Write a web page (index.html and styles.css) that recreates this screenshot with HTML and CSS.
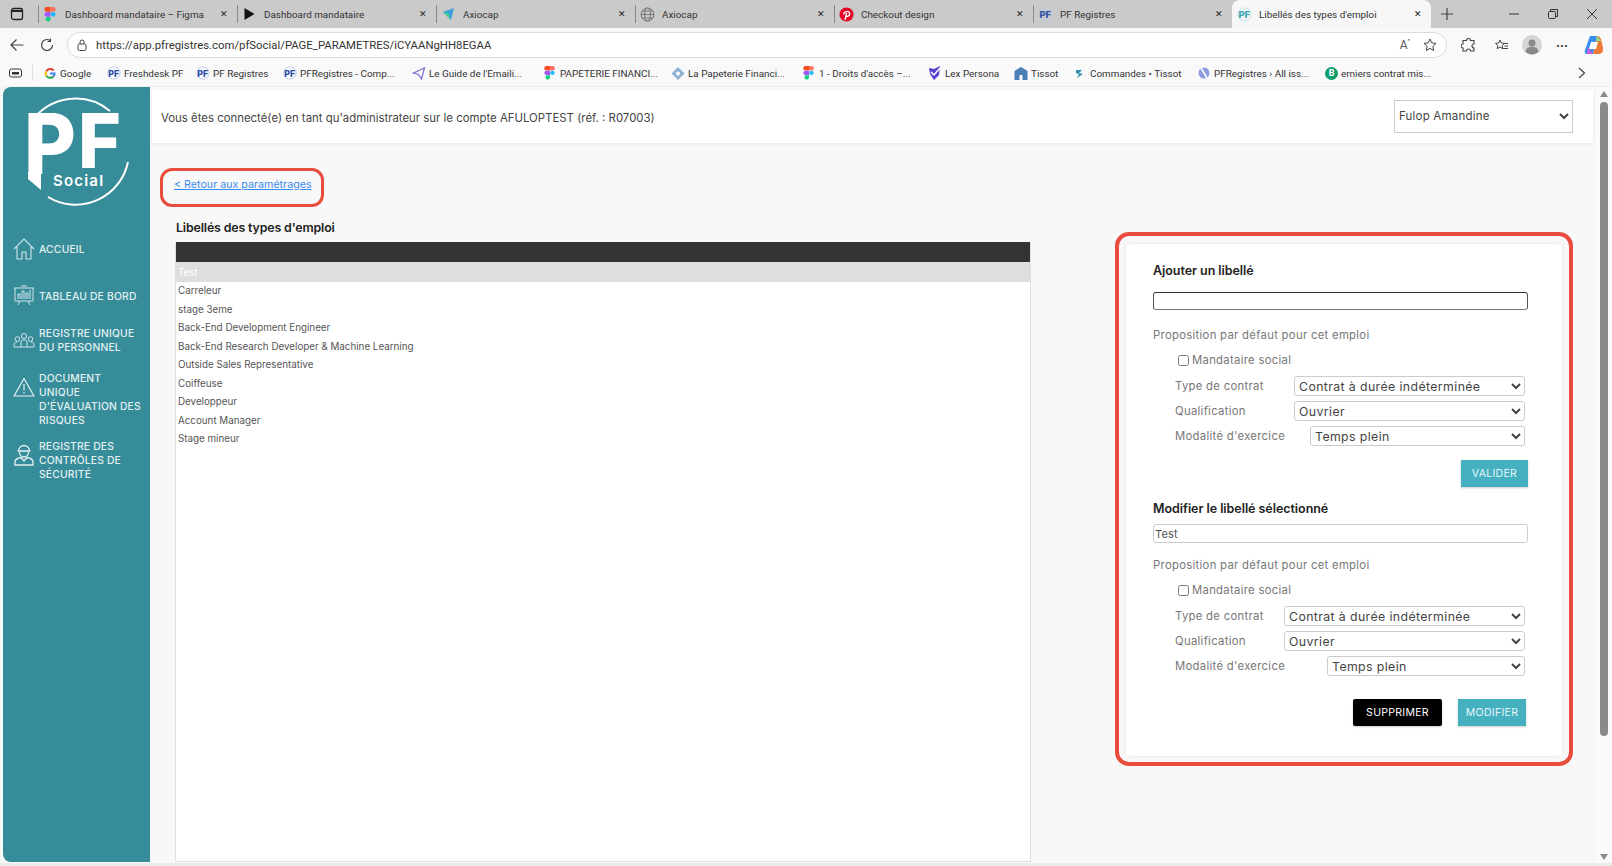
FILE: index.html
```html
<!DOCTYPE html>
<html lang="fr">
<head>
<meta charset="utf-8">
<title>Libellés des types d'emploi</title>
<link rel="stylesheet" href="styles.css">
</head>
<body>
<svg class="defs" width="0" height="0" aria-hidden="true">
  <symbol id="figma" viewBox="0 0 12 16">
    <path d="M2 0h4v5H2a2.5 2.5 0 0 1 0-5z" fill="#f24e1e"/>
    <path d="M6 0h3a2.5 2.5 0 0 1 0 5H6z" fill="#ff7262"/>
    <path d="M2 5.300h4v5H2a2.500 2.500 0 0 1 0-5z" fill="#a259ff"/>
    <circle cx="8.800" cy="7.800" r="2.500" fill="#1abcfe"/>
    <path d="M2 10.600h4V13a2.600 2.600 0 1 1-4-2.400z" fill="#0acf83"/>
  </symbol>
  <symbol id="pf" viewBox="0 0 16 16">
    <circle cx="8" cy="8" r="7" fill="none" stroke="#b9c6e8" stroke-width="1"/>
    <text x="1.500" y="12" font-family="Inter, sans-serif" font-size="10" font-weight="800" fill="#2b4fa8">PF</text>
  </symbol>
  <symbol id="pfteal" viewBox="0 0 16 16">
    <circle cx="8" cy="8" r="7" fill="none" stroke="#bfe3e8" stroke-width="1"/>
    <text x="1.500" y="12" font-family="Inter, sans-serif" font-size="10" font-weight="800" fill="#3aa6b6">PF</text>
  </symbol>
</svg>

<header class="tabstrip">
  <div class="win-menu">
    <svg width="14" height="14" viewBox="0 0 14 14"><rect x="1.500" y="1.500" width="11" height="11" rx="2" fill="none" stroke="#222" stroke-width="1.300"/><path d="M1.500 3h11v2h-11z" fill="#222"/></svg>
  </div>
  <div class="tab">
    <svg class="fav" width="11" height="15"><use href="#figma"/></svg>
    <span class="tab-title">Dashboard mandataire – Figma</span><span class="tab-x">✕</span>
  </div>
  <div class="tab">
    <svg class="fav" width="12" height="12" viewBox="0 0 12 12"><path d="M1 0l10 6-10 6z" fill="#111"/></svg>
    <span class="tab-title">Dashboard mandataire</span><span class="tab-x">✕</span>
  </div>
  <div class="tab">
    <svg class="fav" width="13" height="14" viewBox="0 0 13 14"><path d="M1 5l11-4-3 12z" fill="#3aa0d8"/><path d="M1 5l5 1 3 7z" fill="#3fcf8e"/></svg>
    <span class="tab-title">Axiocap</span><span class="tab-x">✕</span>
  </div>
  <div class="tab">
    <svg class="fav" width="15" height="15" viewBox="0 0 15 15" fill="none" stroke="#777"><circle cx="7.500" cy="7.500" r="6.500"/><ellipse cx="7.500" cy="7.500" rx="3" ry="6.500"/><path d="M1 7.500h13M2 4h11M2 11h11"/></svg>
    <span class="tab-title">Axiocap</span><span class="tab-x">✕</span>
  </div>
  <div class="tab">
    <svg class="fav" width="15" height="15" viewBox="0 0 15 15"><circle cx="7.500" cy="7.500" r="7" fill="#e60023"/><path d="M6 13l1.600-7M5 7.500C4 4.500 10.500 3 10.700 6.500 10.800 9.500 7.500 10 7 8.500" fill="none" stroke="#fff" stroke-width="1.400"/></svg>
    <span class="tab-title">Checkout design</span><span class="tab-x">✕</span>
  </div>
  <div class="tab">
    <svg class="fav" width="15" height="15"><use href="#pf"/></svg>
    <span class="tab-title">PF Registres</span><span class="tab-x">✕</span>
  </div>
  <div class="tab tab-active">
    <svg class="fav" width="15" height="15"><use href="#pfteal"/></svg>
    <span class="tab-title">Libellés des types d'emploi</span><span class="tab-x">✕</span>
  </div>
  <div class="tab-new">
    <svg width="12" height="12" viewBox="0 0 12 12"><path d="M6 0v12M0 6h12" stroke="#444" stroke-width="1.200"/></svg>
  </div>
  <div class="win-controls">
    <svg width="10" height="10" viewBox="0 0 10 10"><path d="M0 5h10" stroke="#333"/></svg>
    <svg width="10" height="10" viewBox="0 0 10 10" fill="none" stroke="#333"><rect x=".5" y="2.500" width="7" height="7" rx="1"/><path d="M2.500 2.500V.5h7v7H7.500"/></svg>
    <svg width="10" height="10" viewBox="0 0 10 10"><path d="M0 0l10 10M10 0L0 10" stroke="#333"/></svg>
  </div>
</header>

<div class="toolbar">
  <svg class="tool-ico" width="14" height="14" viewBox="0 0 14 14" fill="none" stroke="#444" stroke-width="1.200"><path d="M13.500 7H1M6.500 1.500L1 7l5.500 5.500"/></svg>
  <svg class="tool-ico" width="14" height="14" viewBox="0 0 14 14" fill="none" stroke="#444" stroke-width="1.200"><path d="M12.500 7A5.500 5.500 0 1 1 10 2.400M10.500.5v3h-3"/></svg>
  <div class="omnibox">
    <svg width="10" height="12" viewBox="0 0 10 12" fill="none" stroke="#444"><rect x="1" y="5" width="8" height="6.500" rx="1.500"/><path d="M3 5V3a2 2 0 0 1 4 0v2"/></svg>
    <span class="url">https://app.pfregistres.com/pfSocial/PAGE_PARAMETRES/iCYAANgHH8EGAA</span>
    <span class="omni-a">A<sup>”</sup></span>
    <svg width="14" height="14" viewBox="0 0 14 14" fill="none" stroke="#444"><path d="M7 1l1.800 3.900 4.200.5-3.100 2.900.8 4.200L7 10.400l-3.700 2.100.8-4.200L1 5.400l4.200-.5z"/></svg>
  </div>
  <div class="tool-right">
    <svg width="15" height="15" viewBox="0 0 15 15" fill="none" stroke="#444" stroke-width="1.100"><path d="M5.500 2.500a2 2 0 0 1 4 0H13v3.500a2 2 0 0 0 0 4V13H9.500a2 2 0 0 0-4 0H2v-3a2 2 0 0 1 0-4V2.500z"/></svg>
    <svg class="tool-fav" width="15" height="15" viewBox="0 0 15 15" fill="none" stroke="#444"><path d="M6 2l1.300 3 3.200.4-2.300 2.100.6 3.200L6 9.100 3.200 10.700l.6-3.200L1.500 5.400 4.700 5zM10 5.500h4M10.500 8h3.500M9 10.500h5"/></svg>
    <svg class="tool-avatar" width="20" height="20" viewBox="0 0 20 20"><circle cx="10" cy="10" r="10" fill="#d5d5d5"/><circle cx="10" cy="8" r="3.500" fill="#8a8a8a"/><path d="M3.500 17a6.500 5.500 0 0 1 13 0 10 10 0 0 1-13 0z" fill="#8a8a8a"/></svg>
    <span class="tool-dots">···</span>
    <svg class="tool-copilot" width="20" height="20" viewBox="0 0 20 20"><path d="M6 1h7l-4 18H3C1 19 0 17 1 15z" fill="#3a8df0"/><path d="M13 1c2 0 3 1 4 3l2 9c.5 3-1 6-4 6H9z" fill="#f07a3a"/><path d="M7 7h7l-2 7H5z" fill="#fff"/><path d="M13 1l4 5h-5z" fill="#7be08f"/><path d="M4 12l5 7H3z" fill="#c85ae0"/></svg>
  </div>
</div>

<nav class="bookmarks">
  <svg class="bm-menu" width="13" height="11" viewBox="0 0 13 11"><rect x=".5" y="1" width="12" height="8" rx="2" fill="none" stroke="#333"/><path d="M3 4h7v2.500H3z" fill="#333"/></svg>
  <span class="bm-sep"></span>
  <a class="bm bm-google"><svg width="11" height="11" viewBox="0 0 12 12" fill="none" stroke-width="2.200"><path d="M10 2.700A5 5 0 0 0 2 3.500" stroke="#ea4335"/><path d="M2 3.500a5 5 0 0 0 0 5" stroke="#fbbc05"/><path d="M2 8.500a5 5 0 0 0 8 .5" stroke="#34a853"/><path d="M10 9a5 5 0 0 0 1-3H6" stroke="#4285f4"/></svg>Google</a>
  <a class="bm bm-fresh"><svg width="14" height="14"><use href="#pf"/></svg>Freshdesk PF</a>
  <a class="bm bm-reg"><svg width="14" height="14"><use href="#pf"/></svg>PF Registres</a>
  <a class="bm bm-comp"><svg width="14" height="14"><use href="#pf"/></svg>PFRegistres - Comp...</a>
  <a class="bm bm-guide"><svg width="13" height="13" viewBox="0 0 13 13" fill="none" stroke="#7a6fd0" stroke-width="1.200"><path d="M12 1L1 6l5 1.500L9 12z"/></svg>Le Guide de l'Emaili...</a>
  <a class="bm bm-pap"><svg width="14" height="14"><use href="#figma"/></svg>PAPETERIE FINANCI...</a>
  <a class="bm bm-lap"><svg width="13" height="13" viewBox="0 0 13 13"><path d="M6.500 0L13 6.500 6.500 13 0 6.500z" fill="#8fb3d3"/><circle cx="6.500" cy="6.500" r="2" fill="#fff"/></svg>La Papeterie Financi...</a>
  <a class="bm bm-droits"><svg width="14" height="14"><use href="#figma"/></svg>1 - Droits d'accès –...</a>
  <a class="bm bm-lex"><svg width="14" height="14" viewBox="0 0 14 14"><path d="M1 2l5 1 6-3-1 9-5 5-4-6z" fill="#5a3fd0"/><path d="M3 6l3 3 6-7" fill="none" stroke="#fff" stroke-width="1.500"/></svg>Lex Persona</a>
  <a class="bm bm-tis"><svg width="13" height="13" viewBox="0 0 13 13"><path d="M6.500 0L13 4v9H8V8H5v5H0V4z" fill="#4a7fb5"/></svg>Tissot</a>
  <a class="bm bm-com"><svg width="8" height="11" viewBox="0 0 8 11"><path d="M0 2h6L3 5l4 1-6 4 2-4-3-1z" fill="#2f8fb0"/></svg>Commandes • Tissot</a>
  <a class="bm bm-all"><svg width="12" height="12" viewBox="0 0 12 12"><circle cx="6" cy="6" r="5.500" fill="#8c9be0"/><path d="M3 1l6 10" stroke="#fff" stroke-width="1.500"/></svg>PFRegistres › All iss...</a>
  <a class="bm bm-b"><span class="bm-b-ico">B</span>erniers contrat mis...</a>
  <svg class="bm-more" width="8" height="12" viewBox="0 0 8 12" fill="none" stroke="#444" stroke-width="1.200"><path d="M1 1l5.500 5L1 11"/></svg>
</nav>

<div class="viewport">
  <aside class="sidebar">
    <svg class="logo" width="115" height="118" viewBox="0 0 115 118" role="img" aria-label="PF Social">
      <path d="M12 27A53.500 53.500 0 0 1 90 17" fill="none" stroke="#fff" stroke-width="2"/>
      <path d="M108 68A53.500 53.500 0 0 1 28 103" fill="none" stroke="#fff" stroke-width="2"/>
      <text class="logo-p" x="4" y="80" textLength="52" lengthAdjust="spacingAndGlyphs">P</text>
      <text class="logo-f" x="58" y="74" textLength="43" lengthAdjust="spacingAndGlyphs">F</text>
      <path d="M8 78h13v18L8 85z" fill="#fff"/>
      <text class="logo-social" x="33" y="92">Social</text>
    </svg>
    <ul class="nav">
      <li class="nav-item nav-home">
        <svg width="22" height="22" viewBox="0 0 22 22" fill="none" stroke="#cfe5e8" stroke-width="1.100"><path d="M1 11L11 1l10 10M4 9v12h5v-7h4v7h5V9"/></svg>
        <span>ACCUEIL</span>
      </li>
      <li class="nav-item nav-board">
        <svg width="22" height="22" viewBox="0 0 22 22" fill="none" stroke="#cfe5e8"><path d="M1 3h20M2 3v13h18V3M5 20l2-4M17 20l-2-4M8 1h6"/><path d="M5 14V9h2v5M9 14V6h2v8M13 14V8h2v6M17 14V5" stroke-width="1"/></svg>
        <span>TABLEAU DE BORD</span>
      </li>
      <li class="nav-item nav-reg">
        <svg width="22" height="16" viewBox="0 0 22 16" fill="none" stroke="#cfe5e8"><circle cx="4.500" cy="7" r="2.300"/><circle cx="11" cy="4" r="2.600"/><circle cx="17.500" cy="7" r="2.300"/><path d="M1 15v-2c0-2 1-3 3.500-3M8 15V9.500c0-1 1-1.500 3-1.500s3 .5 3 1.500V15M21 15v-2c0-2-1-3-3.500-3M1 15h20" /></svg>
        <span>REGISTRE UNIQUE<br>DU PERSONNEL</span>
      </li>
      <li class="nav-item nav-doc">
        <svg width="22" height="20" viewBox="0 0 22 20" fill="none" stroke="#e3f0f2" stroke-width="1.200"><path d="M11 1.500L21 19H1z" stroke-linejoin="round"/><path d="M11 7v6.500M11 15v1.500"/></svg>
        <span>DOCUMENT<br>UNIQUE<br>D'ÉVALUATION DES<br>RISQUES</span>
      </li>
      <li class="nav-item nav-sec">
        <svg width="20" height="22" viewBox="0 0 20 22" fill="none" stroke="#e3f0f2" stroke-width="1.300"><path d="M4.500 7a5.500 5.500 0 0 1 11 0zM3.500 7h13M5.500 8c0 3 2 5 4.500 5s4.500-2 4.500-5M1 21v-3c0-3 3-4 6-4.500l3 3.500 3-3.500c3 .5 6 1.500 6 4.500v3z"/></svg>
        <span>REGISTRE DES<br>CONTRÔLES DE<br>SÉCURITÉ</span>
      </li>
    </ul>
  </aside>

  <main class="main">
    <div class="topbar">
      <p class="connected">Vous êtes connecté(e) en tant qu'administrateur sur le compte AFULOPTEST (réf. : R07003)</p>
      <select class="user-select"><option>Fulop Amandine</option></select>
    </div>
    <div class="content">
      <section class="left">
        <div class="back-box"><a class="back-link" href="#">&lt; Retour aux paramétrages</a></div>
        <h1 class="title">Libellés des types d'emploi</h1>
        <div class="table">
          <div class="table-head"></div>
          <div class="row row-selected">Test</div>
          <div class="row">Carreleur</div>
          <div class="row">stage 3eme</div>
          <div class="row">Back-End Development Engineer</div>
          <div class="row">Back-End Research Developer &amp; Machine Learning</div>
          <div class="row">Outside Sales Representative</div>
          <div class="row">Coiffeuse</div>
          <div class="row">Developpeur</div>
          <div class="row">Account Manager</div>
          <div class="row">Stage mineur</div>
        </div>
      </section>

      <section class="panel">
        <div class="card">
          <h2 class="card-title card-title-add">Ajouter un libellé</h2>
          <input class="field field-focus" type="text">
          <p class="hint hint-add">Proposition par défaut pour cet emploi</p>
          <label class="check"><input type="checkbox">Mandataire social</label>
          <div class="line line-first">
            <span class="line-label">Type de contrat</span>
            <select class="sel sel-a"><option>Contrat à durée indéterminée</option></select>
          </div>
          <div class="line">
            <span class="line-label">Qualification</span>
            <select class="sel sel-a"><option>Ouvrier</option></select>
          </div>
          <div class="line">
            <span class="line-label">Modalité d'exercice</span>
            <select class="sel sel-b"><option>Temps plein</option></select>
          </div>
          <div class="actions actions-add">
            <button class="btn btn-teal btn-valider" type="button">VALIDER</button>
          </div>

          <h2 class="card-title card-title-edit">Modifier le libellé sélectionné</h2>
          <input class="field field-edit" type="text" value="Test">
          <p class="hint hint-edit">Proposition par défaut pour cet emploi</p>
          <label class="check"><input type="checkbox">Mandataire social</label>
          <div class="line line-first">
            <span class="line-label">Type de contrat</span>
            <select class="sel sel-c"><option>Contrat à durée indéterminée</option></select>
          </div>
          <div class="line">
            <span class="line-label">Qualification</span>
            <select class="sel sel-c"><option>Ouvrier</option></select>
          </div>
          <div class="line">
            <span class="line-label">Modalité d'exercice</span>
            <select class="sel sel-d"><option>Temps plein</option></select>
          </div>
          <div class="actions actions-edit">
            <button class="btn btn-black" type="button">SUPPRIMER</button>
            <button class="btn btn-teal btn-modifier" type="button">MODIFIER</button>
          </div>
        </div>
      </section>
    </div>
  </main>

  <div class="scrollbar">
    <svg width="8" height="6" viewBox="0 0 8 6"><path d="M4 0l4 6H0z" fill="#8a8a8a"/></svg>
    <div class="thumb"></div>
    <svg class="scroll-down" width="8" height="6" viewBox="0 0 8 6"><path d="M4 6l4-6H0z" fill="#8a8a8a"/></svg>
  </div>
</div>
</body>
</html>
```
FILE: styles.css
```css
* { box-sizing: border-box; }
html, body { margin: 0; padding: 0; }
body {
  width: 1612px;
  height: 866px;
  overflow: hidden;
  display: flex;
  flex-direction: column;
  background: #ececec;
  font-family: Inter, "Liberation Sans", sans-serif;
  color: #555;
}
.defs { position: absolute; }
h1, h2, p, ul { margin: 0; padding: 0; }

/* browser chrome */
.tabstrip {
  height: 28px;
  flex: none;
  display: flex;
  align-items: center;
  background: #cacaca;
  font-family: Roboto, sans-serif;
  font-size: 9.900px;
  color: #333;
}
.win-menu { width: 38px; padding-left: 10px; display: flex; }
.tab {
  width: 199px;
  height: 28px;
  display: flex;
  align-items: center;
  padding-left: 5px;
  position: relative;
  background: linear-gradient(#888, #888) left center / 1px 18px no-repeat;
}
.fav { width: 15px; flex: none; margin-right: 7px; }
.tab-title { flex: 1; white-space: nowrap; overflow: hidden; }
.tab-x { width: 14px; font-size: 9px; color: #222; margin-right: 6px; text-align: center; }
.tab-active { background: #f7f7f7; border-radius: 8px 8px 0 0; }
.tab-new { width: 32px; display: flex; justify-content: center; }
.win-controls {
  flex: 1;
  display: flex;
  justify-content: flex-end;
  gap: 29px;
  padding-right: 15px;
}

.toolbar {
  height: 32px;
  flex: none;
  display: flex;
  align-items: center;
  background: #f9f9f9;
  padding: 2px 0 0 10px;
}
.tool-ico { margin-right: 16px; flex: none; }
.omnibox {
  width: 1380px;
  margin-left: -3px;
  height: 26px;
  flex: none;
  display: flex;
  align-items: center;
  gap: 9px;
  padding: 0 9px 0 9px;
  background: #fff;
  border: 1px solid #dcdcdc;
  border-radius: 13px;
  font-family: Roboto, sans-serif;
  font-size: 11.350px;
  color: #333;
}
.url { flex: 1; }
.omni-a { font-size: 12px; color: #555; margin-right: 4px; }
.omni-a sup { font-size: 7px; }
.tool-right { display: flex; align-items: center; margin-left: 14px; }
.tool-fav { margin-left: 18px; }
.tool-avatar { margin-left: 13px; }
.tool-dots { margin-left: 14px; font-weight: 700; font-size: 12px; color: #333; width: 14px; }
.tool-copilot { margin-left: 14px; }

.bookmarks {
  height: 27px;
  flex: none;
  display: flex;
  align-items: center;
  background: #f9f9f9;
  border-bottom: 1px solid #eee;
  padding-left: 9px;
  font-family: Roboto, sans-serif;
  font-size: 9.900px;
  color: #333;
  white-space: nowrap;
}
.bm-menu { flex: none; }
.bm-sep { width: 1px; height: 16px; background: #ddd; margin: 0 10px 0 10px; }
.bm { display: flex; align-items: center; gap: 3px; flex: none; }
.bm > svg { width: 14px; flex: none; }
.bm-google { width: 64px; }
.bm-fresh { width: 89px; }
.bm-reg { width: 87px; }
.bm-comp { width: 129px; }
.bm-guide { width: 131px; }
.bm-pap { width: 128px; }
.bm-lap { width: 131px; }
.bm-droits { width: 126px; }
.bm-lex { width: 86px; }
.bm-tis { width: 59px; }
.bm-com { width: 124px; }
.bm-all { width: 128px; }
.bm-b { width: 150px; }
.bm-b-ico {
  width: 13px;
  height: 13px;
  border-radius: 50%;
  background: #0f9d6b;
  color: #fff;
  font-size: 9px;
  font-weight: 700;
  text-align: center;
  line-height: 13px;
}
.bm-more { margin-left: 103px; flex: none; }

/* page */
.viewport {
  height: 776px;
  flex: none;
  display: flex;
  background: #f8f8f8;
}
.sidebar {
  width: 147px;
  height: 775px;
  flex: none;
  margin-left: 3px;
  background: #368c99;
  border-radius: 8px 0 0 8px;
  color: #e3f0f2;
  padding-left: 17px;
}
.logo { display: block; margin-top: 7px; }
.logo-p { font: 800 84px Inter, sans-serif; fill: #fff; }
.logo-f { font: 800 76px Inter, sans-serif; fill: #fff; }
.logo-social { font: 600 15px Inter, sans-serif; fill: #fff; letter-spacing: 1.200px; }
.nav { list-style: none; margin-left: -7px; margin-top: 30px; }
.nav-item {
  display: flex;
  align-items: center;
  gap: 4px;
  font-size: 10.300px;
  line-height: 14px;
  letter-spacing: .2px;
  font-weight: 500;
  white-space: nowrap;
}
.nav-item svg { flex: none; width: 22px; }
.nav-home svg, .nav-board svg { margin: -6px 0; }
.nav-board { margin-top: 33px; }
.nav-reg { margin-top: 23px; }
.nav-doc { margin-top: 17px; }
.nav-doc svg { margin-bottom: 24px; }
.nav-sec { margin-top: 12px; }
.nav-sec svg { margin-bottom: 10px; }

.main { flex: 1; min-width: 0; margin-left: 2px; display: flex; flex-direction: column; }
.topbar {
  height: 53px;
  margin-top: 3px;
  flex: none;
  background: #fff;
  box-shadow: 0 1px 3px rgba(0, 0, 0, .07);
  display: flex;
  align-items: center;
  justify-content: space-between;
  padding: 0 20px 0 9px;
}
.connected { font-size: 11.400px; color: #444; margin-top: 2px; }
.user-select {
  width: 179px;
  height: 33px;
  margin-top: -1px;
  border: 1px solid #ccc;
  background: #fff;
  font: 11.500px Inter, sans-serif;
  letter-spacing: .2px;
  color: #444;
}

.content { flex: 1; min-height: 0; display: flex; justify-content: space-between; }
.left { width: 878px; display: flex; flex-direction: column; padding-left: 8px; }
.back-box {
  width: 164px;
  height: 39px;
  margin-top: 25px;
  flex: none;
  border: 3.500px solid #e74c3c;
  border-radius: 12px;
  display: flex;
  align-items: center;
  padding: 0 0 6px 11px;
}
.back-link { font-size: 10.700px; color: #3b8df0; white-space: nowrap; }
.title {
  margin: 13px 0 6px 16px;
  font-size: 12.400px;
  line-height: 16px;
  font-weight: 600;
  color: #222;
  letter-spacing: -.15px;
}
.table {
  flex: 1;
  margin: 0 0 1px 15px;
  width: 856px;
  background: #fff;
  border: 1px solid #e1e1e1;
  border-top: 0;
  overflow: hidden;
  font-size: 9.800px;
  color: #555;
}
.table-head { height: 20px; background: #333; }
.row { height: 18.500px; line-height: 18px; padding-left: 2px; }
.row-selected { height: 20px; line-height: 21px; background: #dedede; color: #fff; }

.panel {
  width: 458px;
  height: 534px;
  margin: 89px 20px 0 0;
  flex: none;
  border: 4px solid #e74c3c;
  border-radius: 14px;
  padding: 8px 7px 6px;
}
.card {
  height: 512px;
  background: #fff;
  box-shadow: 0 0 4px rgba(0, 0, 0, .08);
  padding: 19px 34px 0 27px;
}
.card-title { font-size: 12.500px; line-height: 16px; font-weight: 600; color: #222; letter-spacing: -.05px; }
.card-title-edit { margin-top: 14px; }
.field {
  display: block;
  width: 375px;
  height: 18px;
  padding: 0 1px;
  border: 1px solid #ccc;
  border-radius: 3px;
  background: #fff;
  font: 11px Inter, sans-serif;
  letter-spacing: .2px;
  color: #555;
  outline: 0;
}
.field-focus { margin-top: 13px; border-color: #333 #555 #777 #555; }
.field-edit { margin-top: 7px; height: 19px; }
.hint { font-size: 11.300px; line-height: 16px; color: #777; letter-spacing: .3px; }
.hint-add { margin-top: 17px; }
.hint-edit { margin-top: 14px; }
.check {
  display: flex;
  align-items: center;
  height: 16px;
  margin: 9px 0 0 25px;
  font-size: 11.300px;
  color: #777;
  letter-spacing: .3px;
}
.check input { width: 11px; height: 11px; margin: 0 3px 0 0; }
.line {
  display: flex;
  justify-content: space-between;
  align-items: center;
  height: 20px;
  margin: 5px 3px 0 22px;
  font-size: 11.300px;
  color: #777;
  letter-spacing: .3px;
}
.line-first { margin-top: 8px; }
.sel {
  height: 20px;
  border: 1px solid #ccc;
  border-radius: 3px;
  background: #fff;
  font: 12.300px Inter, sans-serif;
  letter-spacing: .4px;
  color: #444;
}
.sel-a { width: 231px; }
.sel-b { width: 215px; }
.sel-c { width: 241px; }
.sel-d { width: 198px; }
.actions { display: flex; justify-content: flex-end; }
.actions-add { margin-top: 14px; }
.actions-edit { margin: 23px 2px 0 0; gap: 16px; }
.btn {
  height: 27px;
  padding: 0;
  border: 0;
  font: 400 10.500px Inter, sans-serif;
  letter-spacing: .3px;
  box-shadow: 0 1px 2px rgba(0, 0, 0, .2);
}
.btn-teal { background: #45b0c0; color: #e6f6f8; }
.btn-black { background: #000; color: #fff; width: 89px; border-radius: 2px; }
.btn-valider { width: 67px; }
.btn-modifier { width: 68px; }

.scrollbar {
  width: 16px;
  margin-left: 3px;
  flex: none;
  display: flex;
  flex-direction: column;
  align-items: center;
  padding-top: 4px;
  background: #fafafa;
}
.thumb { width: 8px; height: 634px; margin-top: 5px; border-radius: 4px; background: #8a8a8a; }
.scroll-down { margin-top: auto; margin-bottom: 3px; }
```
